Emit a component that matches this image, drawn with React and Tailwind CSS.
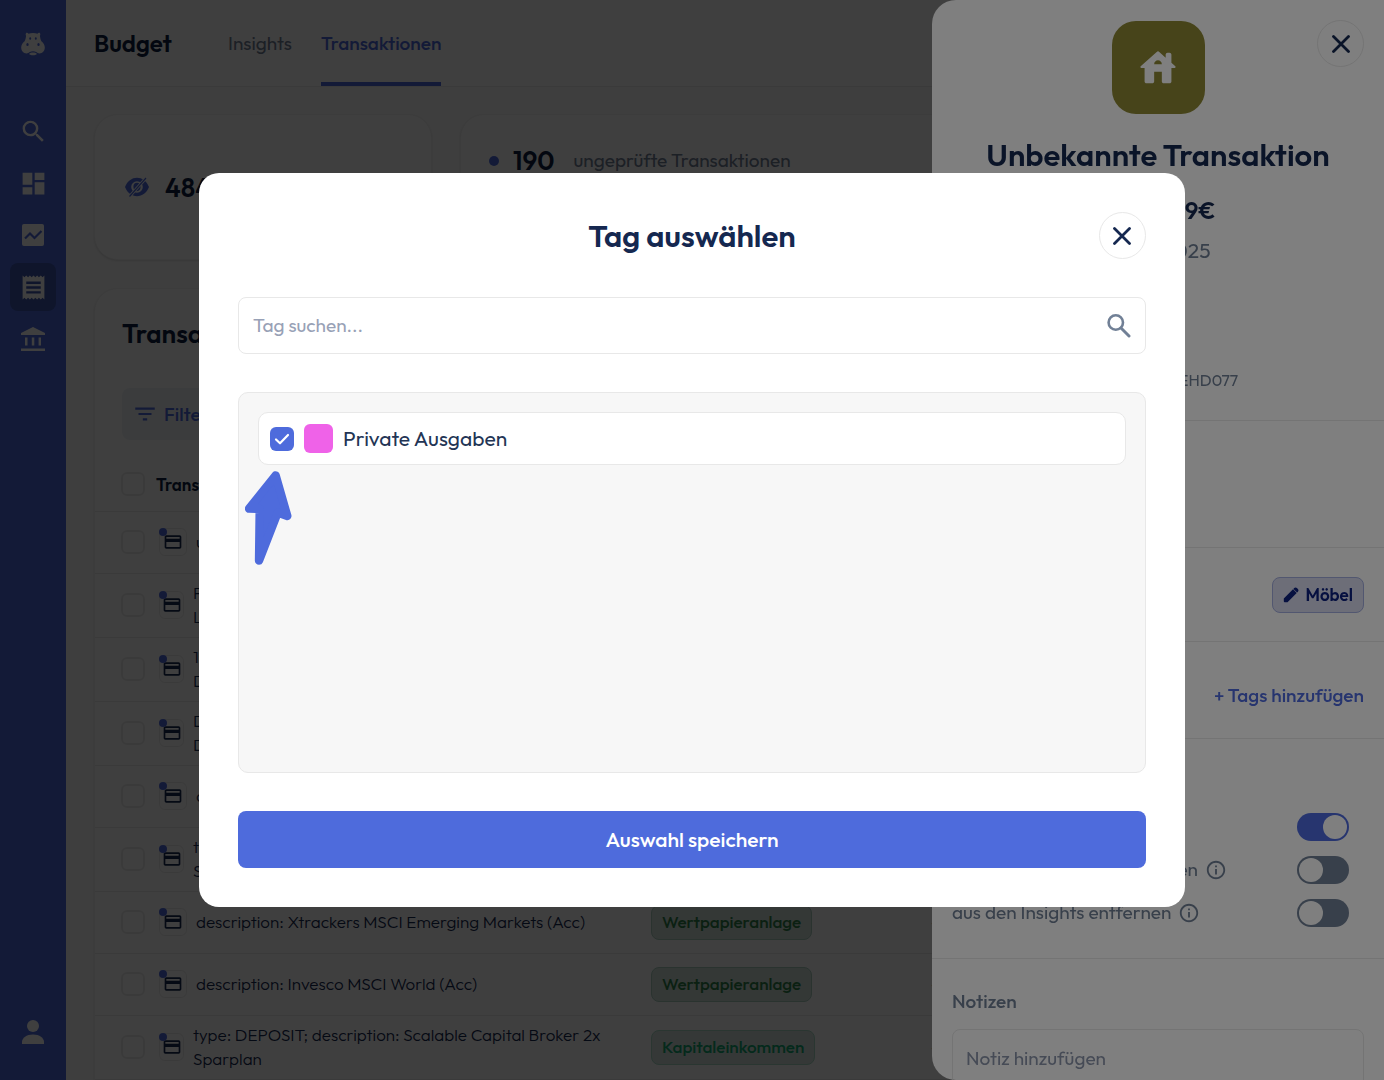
import React from "react";
import {
  MdCreditCard,
  MdDashboard,
  MdFilterList,
  MdInfoOutline,
  MdReceipt,
  MdSearch,
} from "react-icons/md";

const transactions = [
  { lines: ["u"] },
  { lines: ["P", "L"] },
  { lines: ["10", "D"] },
  { lines: ["D", "D"] },
  { lines: ["d"] },
  { lines: ["t", "S"] },
  {
    lines: ["description: Xtrackers MSCI Emerging Markets (Acc)"],
    category: "Wertpapieranlage",
    tone: "green",
  },
  {
    lines: ["description: Invesco MSCI World (Acc)"],
    category: "Wertpapieranlage",
    tone: "green",
  },
  {
    lines: ["type: DEPOSIT; description: Scalable Capital Broker 2x", "Sparplan"],
    category: "Kapitaleinkommen",
    tone: "mint",
  },
];

const badgeTones = {
  green: "bg-[#d0e0da] border-[#a8ccbe] text-[#2c8048]",
  mint: "bg-[#d4e2dd] border-[#a8dac6] text-[#10a870]",
};

const HippoIcon = () => (
  <svg viewBox="0 0 24 24" className="size-6 fill-white">
    <path
      fillRule="evenodd"
      d="M5.4.8c1 0 1.700.4 2 .9C8.700 1.200 10.300 1 12 1s3.300.2 4.600.7c.3-.5 1-.9 2-.9.9.8.9 2.100.3 3 .3 2 .6 3.900 1.500 5.400C22.300 10.900 23.800 13 23.800 15.600c0 3.500-2.500 5.900-5.300 5.900-1.300 0-2.300-.8-3.300-1.400C14.300 19.500 13.200 19.300 12 19.300s-2.300.2-3.200.8c-1 .6-2 1.400-3.300 1.400-2.800 0-5.300-2.400-5.300-5.900 0-2.600 1.500-4.700 3.400-6.400C4.500 7.700 4.800 5.800 5.100 3.800c-.6-.9-.6-2.200.3-3ZM9.200 5.200a1 1.300 0 1 0 0 2.600 1 1.300 0 0 0 0-2.600Zm5.600 0a1 1.300 0 1 0 0 2.600 1 1.300 0 0 0 0-2.600ZM6.500 10.900a1.200 1.500 0 1 0 0 3 1.200 1.500 0 0 0 0-3Zm11 0a1.200 1.500 0 1 0 0 3 1.200 1.500 0 0 0 0-3Z"
    />
    <path d="M12 20.500c1.700 0 3 .5 4 1.400-1 .9-2.300 1.400-4 1.400s-3-.5-4-1.400c1-.9 2.300-1.400 4-1.400Z" />
  </svg>
);

const ChartIcon = () => (
  <svg viewBox="0 0 22 22" className="size-[22px]">
    <rect width="22" height="22" rx="2" className="fill-white" />
    <path
      d="m3 14.500 5-5 4.500 4.500L19.500 7"
      fill="none"
      strokeWidth="2.200"
      className="stroke-[#4e6bdf]"
    />
  </svg>
);

const BankIcon = () => (
  <svg viewBox="0 0 24 24" className="size-6 fill-white">
    <path d="M12 0 24 6v2H0V6ZM4 10.500h2.500v8H4Zm6.800 0h2.500v8h-2.500Zm6.800 0H20v8h-2.400ZM0 21.500h24V24H0Z" />
  </svg>
);

const UserIcon = () => (
  <svg viewBox="0 0 22 24" className="h-6 w-[22px] fill-white">
    <circle cx="11" cy="6" r="6" />
    <path d="M0 24v-2c0-4 4.500-7.500 11-7.500S22 18 22 22v2Z" />
  </svg>
);

const HiddenIcon = () => (
  <svg viewBox="0 0 24 20" className="h-5 w-6 shrink-0 fill-[#4e6bdf]">
    <path
      fillRule="evenodd"
      d="M12 .8c5.200 0 9.700 3.400 12 9.200-2.300 5.800-6.800 9.200-12 9.200S2.300 15.800 0 10C2.300 4.200 6.800.8 12 .8Zm0 3.400a5.800 5.800 0 1 0 0 11.600 5.800 5.800 0 0 0 0-11.600Z"
    />
    <path d="M12 5.800c2.400 0 3.600 1.700 3.600 4S14.400 14.200 12 14.200s-3.600-2-3.600-4.400 1.200-4 3.600-4Z" />
    <path d="M4.500 19.500 21 1" className="stroke-white" strokeWidth="3" />
    <path d="M4.500 19.500 21 1" className="stroke-[#4e6bdf]" strokeWidth="1.200" />
  </svg>
);

const HouseIcon = () => (
  <svg viewBox="0 0 24 24" className="size-[46px] fill-white">
    <path d="M19 9.300V5c0-.55-.45-1-1-1h-1c-.55 0-1 .45-1 1v1.600l-3.330-3a.996.996 0 0 0-1.340 0l-8.360 7.530c-.34.3-.13.87.33.87H5v7c0 .55.45 1 1 1h3c.55 0 1-.45 1-1v-5h4v5c0 .55.45 1 1 1h3c.55 0 1-.45 1-1v-7h1.700c.46 0 .68-.57.33-.87L19 9.300zm-9 .7c0-1.100.9-2 2-2s2 .9 2 2h-4z" />
  </svg>
);

const PencilIcon = () => (
  <svg viewBox="0 0 16 16" className="size-4 fill-[#0c2080]">
    <path d="M.8 11.500 10 2.300l3.700 3.700-9.200 9.200H1.700a.9.900 0 0 1-.9-.9ZM10.400 1.900l.8-.8c.8-.8 1.900-.8 2.700 0l1 1c.8.800.8 1.900 0 2.700l-.8.800Z" />
  </svg>
);

const CloseButton = () => (
  <button
    type="button"
    aria-label="Schließen"
    className="flex size-[47px] items-center justify-center rounded-full border border-[#e8e8e8]"
  >
    <svg viewBox="0 0 18 18" className="size-[18px]">
      <path
        d="m1.500 1.500 15 15m0-15-15 15"
        strokeWidth="2.800"
        strokeLinecap="round"
        className="stroke-[#152850]"
      />
    </svg>
  </button>
);

const EmptyCheckbox = ({ label }) => (
  <input
    type="checkbox"
    aria-label={label}
    className="block size-6 appearance-none rounded-md border-2 border-[#ebebeb]"
  />
);

const navItems = [
  { label: "Suche", icon: <MdSearch className="size-[29px] text-white" /> },
  { label: "Dashboard", icon: <MdDashboard className="size-[29px] text-white" /> },
  { label: "Analyse", icon: <ChartIcon /> },
  { label: "Budget", icon: <MdReceipt className="size-[29px] text-white" />, active: true },
  { label: "Konten", icon: <BankIcon /> },
];

const Sidebar = () => (
  <nav className="flex w-[66px] shrink-0 flex-col items-center bg-[#4e6bdf] pt-8 pb-6">
    <a href="#" aria-label="Start" className="mb-[51px]">
      <HippoIcon />
    </a>
    <div className="flex flex-col gap-1">
      {navItems.map((item) => (
        <a
          key={item.label}
          href="#"
          aria-label={item.label}
          className={
            item.active
              ? "flex h-12 w-[46px] items-center justify-center rounded-lg bg-[#3c54ac]"
              : "flex h-12 w-[46px] items-center justify-center rounded-lg"
          }
        >
          {item.icon}
        </a>
      ))}
    </div>
    <a href="#" aria-label="Profil" className="mt-auto flex h-12 items-center">
      <UserIcon />
    </a>
  </nav>
);

const TransactionRow = ({ lines, category, tone }) => (
  <tr className="border-y border-[#e8e8e8]">
    <td className="w-[50px] py-0 pl-[26px]">
      <EmptyCheckbox label={lines[0]} />
    </td>
    <td
      className={
        lines.length > 1 ? "h-16 w-[506px] py-0 pl-[14px]" : "h-[62px] w-[506px] py-0 pl-[14px]"
      }
    >
      <div className="flex items-center gap-[9px]">
        <span
          className={
            lines.length > 1
              ? "relative flex h-7 w-[25px] shrink-0 items-center justify-center rounded-md border border-[#ebebeb]"
              : "relative flex size-7 shrink-0 items-center justify-center rounded-md border border-[#ebebeb]"
          }
        >
          <MdCreditCard className="size-5 shrink-0 text-[#152850]" />
          <span className="absolute -top-px -left-px size-2 rounded-full bg-[#4e6bdf]" />
        </span>
        <span className="text-[17px] leading-6 font-light whitespace-nowrap text-[#152850]">
          {lines.map((line, i) => (
            <span key={i} className="block">
              {line}
            </span>
          ))}
        </span>
      </div>
    </td>
    <td className="w-[280px] py-0">
      {category && (
        <span
          className={`inline-flex h-[35px] items-center rounded-lg border px-[10px] text-[17px] font-medium ${badgeTones[tone]}`}
        >
          {category}
        </span>
      )}
    </td>
    <td className="py-0 text-[#152850]">{category && "-"}</td>
  </tr>
);

const BudgetPage = () => (
  <div className="flex min-w-0 flex-1 flex-col bg-[#fbfbfb]">
    <header className="flex h-[87px] shrink-0 items-center border-b border-[#e8e8e8] bg-white pl-7">
      <h1 className="w-[134px] text-2xl font-semibold text-[#0e1f40]">Budget</h1>
      <div className="flex h-full gap-[29px] text-[19px]">
        <a href="#" className="flex items-center text-[#718096]">
          Insights
        </a>
        <a
          href="#"
          className="flex items-center border-y-4 border-t-transparent border-b-[#4e6bdf] font-medium text-[#4e6bdf]"
        >
          Transaktionen
        </a>
      </div>
    </header>
    <main className="flex flex-col gap-7 px-7 pt-[27px]">
      <div className="flex gap-7">
        <section className="flex h-[146px] w-[338px] items-center gap-4 rounded-3xl border border-[#f0f0f0] bg-white px-[30px] shadow-sm">
          <HiddenIcon />
          <p className="text-[26px] font-semibold text-[#0e1f40]">484</p>
        </section>
        <section className="flex flex-1 items-start rounded-3xl border border-[#f0f0f0] bg-white px-7 pt-[26px] shadow-sm">
          <div className="flex items-center">
            <span className="size-[10px] rounded-full bg-[#4e6bdf]" />
            <span className="ml-[14px] text-[26px] font-semibold text-[#0e1f40]">190</span>
            <span className="ml-[19px] text-[19px] text-[#718096]">ungeprüfte Transaktionen</span>
          </div>
        </section>
      </div>
      <section className="rounded-3xl border border-[#f0f0f0] bg-white pt-[27px] pb-7 shadow-sm">
        <div className="px-[27px]">
          <h2 className="text-[26px] leading-9 font-semibold text-[#0e1f40]">Transaktionen</h2>
          <button
            type="button"
            className="mt-9 mb-[18px] flex h-[52px] items-center gap-[6px] rounded-lg bg-[#edf2f7] px-[10px] text-[19px] font-medium text-[#4e6bdf]"
          >
            <MdFilterList className="size-[26px] stroke-[#4e6bdf]" />
            Filter
          </button>
        </div>
        <table className="w-full table-fixed border-collapse text-left">
          <thead>
            <tr className="h-[53px]">
              <th className="w-[50px] py-0 pl-[26px]">
                <EmptyCheckbox label="Alle auswählen" />
              </th>
              <th className="w-[506px] py-0 pl-[11px] text-[17px] font-semibold text-[#0e1f40]">
                Transaktion
              </th>
              <th className="w-[280px] py-0" />
              <th className="py-0" />
            </tr>
          </thead>
          <tbody>
            {transactions.map((transaction, i) => (
              <TransactionRow key={i} {...transaction} />
            ))}
          </tbody>
        </table>
      </section>
    </main>
  </div>
);

const ToggleRow = ({ id, label, on, info }) => (
  <div className="flex h-[43px] items-center justify-between pr-[15px]">
    <label htmlFor={id} className="flex items-center gap-[7px] text-[19px] text-[#718096]">
      {label}
      {info && <MdInfoOutline className="size-[22px]" />}
    </label>
    <input
      id={id}
      type="checkbox"
      role="switch"
      defaultChecked={on}
      className="h-7 w-[52px] appearance-none rounded-full bg-[#718096] p-[2px] before:block before:size-6 before:rounded-full before:bg-white checked:bg-[#4e6bdf] checked:before:ml-6"
    />
  </div>
);

const TransactionDrawer = () => (
  <aside className="fixed inset-y-0 right-0 flex w-[452px] flex-col overflow-hidden rounded-l-3xl bg-white">
    <div className="absolute top-5 right-5">
      <CloseButton />
    </div>
    <div className="flex h-[421px] shrink-0 flex-col items-center border-b border-[#e8e8e8] pt-[21px]">
      <div className="flex size-[93px] items-center justify-center rounded-3xl bg-[#8e8834]">
        <HouseIcon />
      </div>
      <h2 className="mt-5 text-[31px] leading-[42px] font-semibold text-[#152850]">
        Unbekannte Transaktion
      </h2>
      <p className="mt-4 text-2xl leading-9 font-semibold text-[#152850]">-1.299,99€</p>
      <p className="mt-[6px] text-[21px] leading-8 text-[#718096]">20.01.2025</p>
      <p className="mt-[98px] text-base leading-8 text-[#718096]">Mandatsref. AEHD077</p>
    </div>
    <div className="h-[127px] shrink-0 border-b border-[#e8e8e8]" />
    <div className="flex h-[94px] shrink-0 items-center justify-end border-b border-[#e8e8e8] px-5">
      <button
        type="button"
        className="flex h-9 items-center gap-[6px] rounded-lg border border-[#a4aee0] bg-[#dadcf0] px-[10px] text-[17px] font-semibold text-[#0c2080]"
      >
        <PencilIcon />
        Möbel
      </button>
    </div>
    <div className="flex h-[97px] shrink-0 items-center justify-end border-b border-[#e8e8e8] px-5 pt-[10px]">
      <button type="button" className="text-[19px] font-medium text-[#4e6bdf]">
        + Tags hinzufügen
      </button>
    </div>
    <div className="flex h-[220px] shrink-0 flex-col justify-end border-b border-[#e8e8e8] px-5 pb-6">
      <ToggleRow id="checked" label="geprüft" on />
      <ToggleRow id="forecast" label="aus den Prognosen entfernen" info />
      <ToggleRow id="insights" label="aus den Insights entfernen" info />
    </div>
    <div className="flex flex-col px-5 pt-[26px]">
      <label htmlFor="note" className="mb-3 text-[19px] leading-8 font-medium text-[#718096]">
        Notizen
      </label>
      <textarea
        id="note"
        rows={3}
        placeholder="Notiz hinzufügen"
        className="resize-none rounded-lg border border-[#e8e8e8] px-[13px] py-[14px] text-[19px] placeholder:text-[#8c96ac]"
      />
    </div>
  </aside>
);

const Arrow = () => (
  <svg
    viewBox="45 272 141 282"
    className="pointer-events-none absolute top-[78px] left-[6px] h-[94px] w-[47px]"
  >
    <path
      d="M137 285 57 385 89 386 87 541 143 397 172 407Z"
      strokeWidth="25"
      strokeLinejoin="round"
      className="fill-[#4e6bdc] stroke-[#4e6bdc]"
    />
  </svg>
);

const TagModal = () => (
  <div className="fixed inset-0 flex items-center justify-center bg-black/50">
    <div
      role="dialog"
      aria-labelledby="tag-title"
      className="flex w-full max-w-[986px] flex-col gap-[38px] rounded-[20px] bg-white p-[39px]"
    >
      <div className="flex items-center justify-between">
        <span className="w-[47px]" />
        <h2 id="tag-title" className="text-[31px] leading-[47px] font-semibold text-[#152850]">
          Tag auswählen
        </h2>
        <CloseButton />
      </div>
      <div className="flex h-[57px] items-center rounded-lg border border-[#e8e8e8] px-[14px]">
        <input
          type="text"
          aria-label="Tag suchen"
          placeholder="Tag suchen..."
          className="min-w-0 flex-1 text-[19px] outline-none placeholder:text-[#98a1b6]"
        />
        <svg viewBox="0 0 24 24" className="size-6 fill-none stroke-[#718096]">
          <circle cx="8.800" cy="8.500" r="7.200" strokeWidth="2.600" />
          <path d="m14 14 8 8" strokeWidth="3" strokeLinecap="round" />
        </svg>
      </div>
      <div className="relative h-[381px] rounded-[10px] border border-[#e8e8e8] bg-[#f7f7f7] p-[19px]">
        <label className="flex h-[53px] items-center gap-[10px] rounded-[10px] border border-[#e8e8e8] bg-white px-[11px] text-[21px] text-[#233555]">
          <span className="relative flex size-6">
            <input
              type="checkbox"
              defaultChecked
              className="size-6 appearance-none rounded-md bg-[#4e6bdc]"
            />
            <svg viewBox="0 0 24 24" className="absolute inset-0 size-6 fill-none stroke-white">
              <path
                d="m6 12.500 4 3.800 8-8.300"
                strokeWidth="2.200"
                strokeLinecap="round"
                strokeLinejoin="round"
              />
            </svg>
          </span>
          <span className="size-[29px] rounded-md bg-[#ef62e8]" />
          Private Ausgaben
        </label>
        <Arrow />
      </div>
      <button
        type="button"
        className="h-[57px] rounded-lg bg-[#4e6bdc] text-[21px] font-medium text-white"
      >
        Auswahl speichern
      </button>
    </div>
  </div>
);

const App = () => {
  return (
    <div className="flex h-screen overflow-hidden font-['Outfit','Lato',sans-serif]">
      <Sidebar />
      <BudgetPage />
      <div className="fixed inset-0 bg-black/50" />
      <TransactionDrawer />
      <TagModal />
    </div>
  );
};

export default App;
